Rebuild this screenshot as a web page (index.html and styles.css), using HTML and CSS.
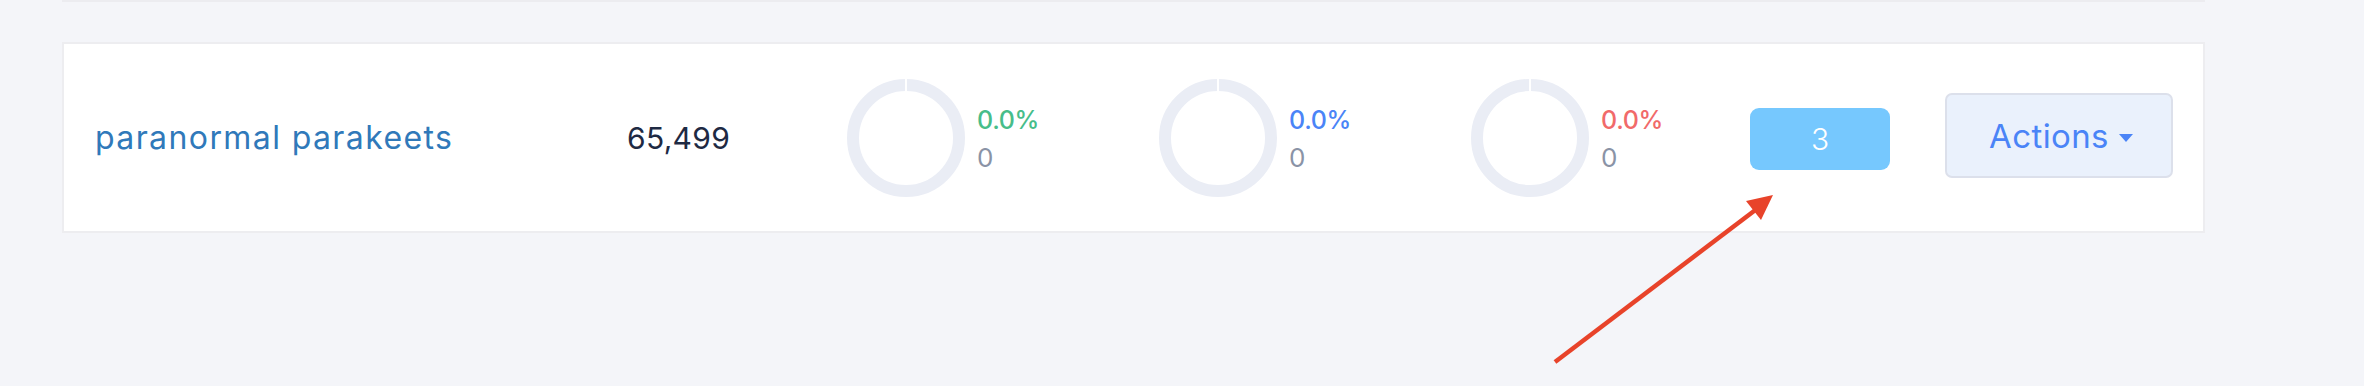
FILE: index.html
```html
<!DOCTYPE html>
<html>
<head>
<meta charset="utf-8">
<link rel="stylesheet" href="styles.css">
</head>
<body>
<div class="page">
  <div class="prev-card"></div>
  <div class="card">
    <div class="cell name"><a class="link">paranormal parakeets</a></div>
    <div class="cell count">65,499</div>
    <div class="cell stat">
      <svg class="ring" width="118" height="118" viewBox="0 0 118 118"><circle cx="59" cy="59" r="53" fill="none" stroke="#eaedf5" stroke-width="12"/><rect x="58" y="0" width="2" height="13" fill="#fff"/></svg>
      <div class="stat-text"><div class="pct green">0.0%</div><div class="num">0</div></div>
    </div>
    <div class="cell stat">
      <svg class="ring" width="118" height="118" viewBox="0 0 118 118"><circle cx="59" cy="59" r="53" fill="none" stroke="#eaedf5" stroke-width="12"/><rect x="58" y="0" width="2" height="13" fill="#fff"/></svg>
      <div class="stat-text"><div class="pct blue">0.0%</div><div class="num">0</div></div>
    </div>
    <div class="cell stat">
      <svg class="ring" width="118" height="118" viewBox="0 0 118 118"><circle cx="59" cy="59" r="53" fill="none" stroke="#eaedf5" stroke-width="12"/><rect x="58" y="0" width="2" height="13" fill="#fff"/></svg>
      <div class="stat-text"><div class="pct red">0.0%</div><div class="num">0</div></div>
    </div>
    <div class="cell badge-cell"><span class="badge">3</span></div>
    <div class="cell"></div>
    <div class="cell"><button class="actions">Actions<span class="caret"></span></button></div>
  </div>
  <svg class="arrow" width="2364" height="386" viewBox="0 0 2364 386">
    <line x1="1555" y1="362" x2="1758" y2="208" stroke="#e8432a" stroke-width="4.5"/>
    <polygon points="1773,195 1746,201 1761,220" fill="#e8432a"/>
  </svg>
</div>
</body>
</html>
```

FILE: styles.css
```css
html, body {
  margin: 0;
  padding: 0;
}
body {
  background: #f4f5f9;
  font-family: Inter, "Liberation Sans", sans-serif;
  width: 2364px;
  height: 386px;
  overflow: hidden;
}
.page {
  position: relative;
  width: 2364px;
  height: 386px;
}
.prev-card {
  margin-left: 62px;
  width: 2143px;
  height: 2px;
  background: #ececf0;
}
.card {
  margin-top: 40px;
  margin-left: 62px;
  width: 2143px;
  height: 191px;
  box-sizing: border-box;
  background: #fff;
  border: 2px solid #ededf0;
  padding-left: 31px;
  display: grid;
  grid-template-columns: 532px 220px 312px 312px 279px 140px 55px 228px;
  align-items: center;
}
.cell {
  display: flex;
  align-items: center;
}
.link {
  color: #3079ba;
  font-size: 32px;
  letter-spacing: 1.4px;
}
.count {
  color: #1e2a43;
  font-size: 30px;
  letter-spacing: 0.3px;
}
.stat {
  gap: 12px;
}
.ring {
  display: block;
  flex: none;
}
.stat-text {
  display: flex;
  flex-direction: column;
  margin-top: 2px;
}
.pct {
  font-size: 25px;
  line-height: 38px;
  font-weight: 500;
  letter-spacing: -0.3px;
}
.num {
  font-size: 26px;
  line-height: 38px;
  color: #8a93a6;
}
.green { color: #47bd8a; }
.blue { color: #4a84f7; }
.red { color: #f16a6a; }
.badge {
  display: flex;
  align-items: center;
  justify-content: center;
  width: 140px;
  height: 62px;
  margin-top: 2px;
  border-radius: 9px;
  background: #76c8fe;
  color: #fff;
  font-size: 30px;
  font-weight: 300;
}
.actions {
  display: flex;
  align-items: center;
  justify-content: center;
  gap: 10px;
  width: 228px;
  height: 85px;
  margin-top: -4px;
  box-sizing: border-box;
  background: #eaf1fc;
  border: 2px solid #dce0eb;
  border-radius: 7px;
  color: #4a84f7;
  font-family: Inter, "Liberation Sans", sans-serif;
  font-size: 33px;
  letter-spacing: 0.4px;
  padding: 0 0 0 4px;
}
.caret {
  width: 0;
  height: 0;
  border-left: 7.5px solid transparent;
  border-right: 7.5px solid transparent;
  border-top: 8px solid #4a84f7;
  margin-top: 4px;
}
.arrow {
  position: absolute;
  left: 0;
  top: 0;
  pointer-events: none;
}
```
